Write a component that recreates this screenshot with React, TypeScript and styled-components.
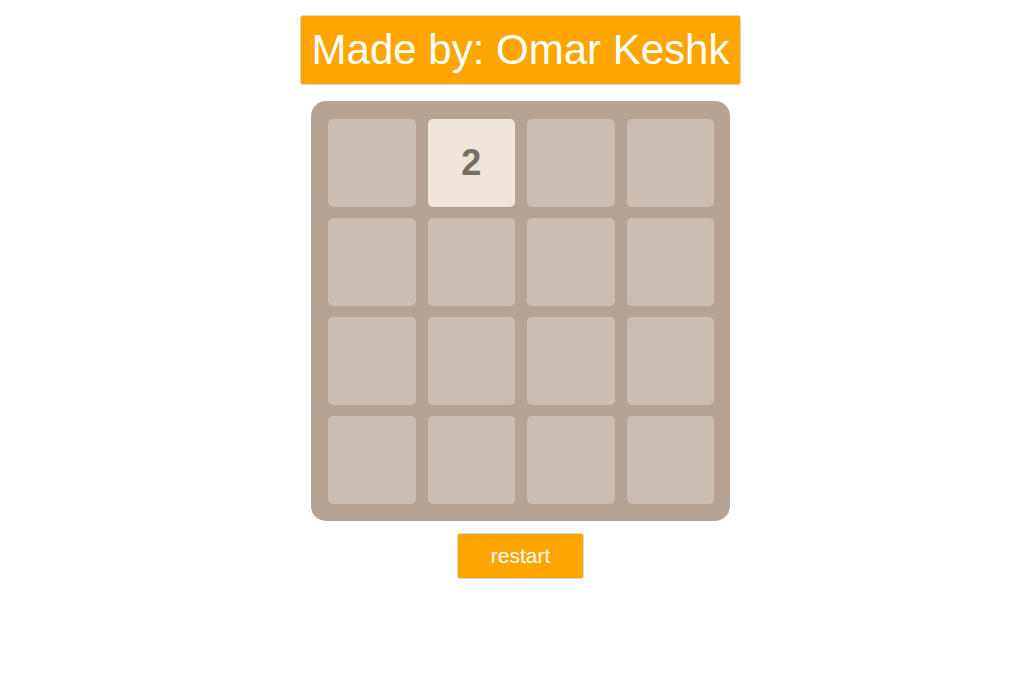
import React from 'react';
import styled, { createGlobalStyle } from 'styled-components';

const GlobalStyle = createGlobalStyle`
  html, body {
    margin: 0;
    padding: 0;
    background: #ffffff;
    font-family: 'Liberation Sans', Arial, sans-serif;
  }
`;

const Page = styled.div`
  display: flex;
  flex-direction: column;
  align-items: center;
  padding: 15px 0 0 17px;
`;

const Header = styled.h1`
  margin: 0;
  width: 441px;
  height: 70px;
  box-sizing: border-box;
  display: flex;
  align-items: center;
  justify-content: center;
  background-color: #ffa500;
  border: 1px solid #d6d6d6;
  border-radius: 3px;
  color: #ffffff;
  font-size: 42px;
  font-weight: normal;
`;

const Board = styled.div`
  margin-top: 16px;
  width: 419px;
  height: 420px;
  box-sizing: border-box;
  padding: 18px 16px 16px 17px;
  display: grid;
  grid-template-columns: repeat(4, 1fr);
  grid-template-rows: repeat(4, 88px);
  column-gap: 12px;
  row-gap: 11px;
  background-color: #b5a396;
  border-radius: 15px;
`;

const Tile = styled.div<{ value: number }>`
  display: flex;
  align-items: center;
  justify-content: center;
  border-radius: 5px;
  background-color: ${({ value }) => (value ? '#f0e5da' : '#cabdb3')};
  color: #776e65;
  font-size: 36px;
  font-weight: bold;
`;

const RestartButton = styled.button`
  margin-top: 12px;
  width: 127px;
  height: 46px;
  background-color: #ffa500;
  border: 1px solid #d6d6d6;
  border-radius: 3px;
  color: #ffffff;
  font-family: 'Liberation Sans', Arial, sans-serif;
  font-size: 21px;
  cursor: pointer;
`;

const cells = [0, 2, 0, 0, 0, 0, 0, 0, 0, 0, 0, 0, 0, 0, 0, 0];

export default function App() {
  return (
    <>
      <GlobalStyle />
      <Page>
        <Header>Made by: Omar Keshk</Header>
        <Board>
          {cells.map((v, i) => (
            <Tile key={i} value={v}>
              {v ? v : ''}
            </Tile>
          ))}
        </Board>
        <RestartButton>restart</RestartButton>
      </Page>
    </>
  );
}
